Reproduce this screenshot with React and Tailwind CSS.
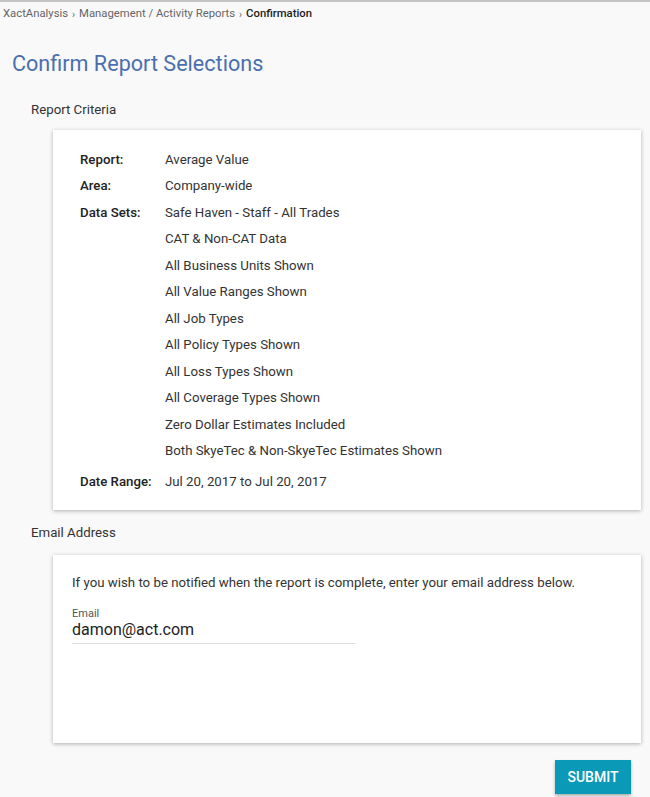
const dataSets = [
  'Safe Haven - Staff - All Trades',
  'CAT & Non-CAT Data',
  'All Business Units Shown',
  'All Value Ranges Shown',
  'All Job Types',
  'All Policy Types Shown',
  'All Loss Types Shown',
  'All Coverage Types Shown',
  'Zero Dollar Estimates Included',
  'Both SkyeTec & Non-SkyeTec Estimates Shown',
]

function Row({ label, children }) {
  return (
    <div className="flex h-[26.5px] items-center">
      <div className="w-[85px] font-medium text-[#222]">{label}</div>
      <div className="text-[#333]">{children}</div>
    </div>
  )
}

export default function App() {
  return (
    <div className="min-h-[797px] bg-[#f9f9f9] border-t-2 border-[#c4c4c4] text-[13.25px] font-['Roboto',sans-serif] text-[#333]">
      <div className="flex items-center gap-[4px] px-[3px] pt-[4px] text-[11.3px] text-[#666]">
        <span>XactAnalysis</span>
        <span className="text-[10px]">›</span>
        <span>Management / Activity Reports</span>
        <span className="text-[10px]">›</span>
        <span className="font-medium text-[#222]">Confirmation</span>
      </div>

      <h1 className="pl-[12px] pt-[25px] text-[21.6px] text-[#4b6fae]">Confirm Report Selections</h1>

      <div className="pl-[31px] pt-[20px] text-[#333]">Report Criteria</div>

      <div className="ml-[53px] mr-[9px] mt-[10px] bg-white px-[27px] pt-[16px] pb-[15px] shadow-[0_1px_4px_rgba(0,0,0,0.3)]">
        <Row label="Report:">Average Value</Row>
        <Row label="Area:">Company-wide</Row>
        {dataSets.map((d, i) => (
          <Row key={d} label={i === 0 ? 'Data Sets:' : ''}>{d}</Row>
        ))}
        <div className="mt-[4.5px]">
          <Row label="Date Range:">Jul 20, 2017 to Jul 20, 2017</Row>
        </div>
      </div>

      <div className="pl-[31px] pt-[13px] text-[#333]">Email Address</div>

      <div className="ml-[53px] mr-[9px] mt-[12px] h-[188px] bg-white px-[19px] pt-[18px] shadow-[0_1px_4px_rgba(0,0,0,0.3)]">
        <p className="text-[#333]">If you wish to be notified when the report is complete, enter your email address below.</p>
        <div className="mt-[14px] w-[283px]">
          <label className="block text-[11px] leading-[13px] text-[#555]">Email</label>
          <input
            defaultValue="damon@act.com"
            className="w-full border-b border-[#ddd] pb-[3px] text-[16px] leading-[20px] text-[#222] outline-none bg-transparent"
          />
        </div>
      </div>

      <div className="mr-[19px] mt-[17px] flex justify-end">
        <button className="h-[34px] w-[76px] bg-[#0a99b7] text-[14px] font-medium text-white shadow-[0_2px_3px_rgba(0,0,0,0.3)]">
          SUBMIT
        </button>
      </div>
    </div>
  )
}
